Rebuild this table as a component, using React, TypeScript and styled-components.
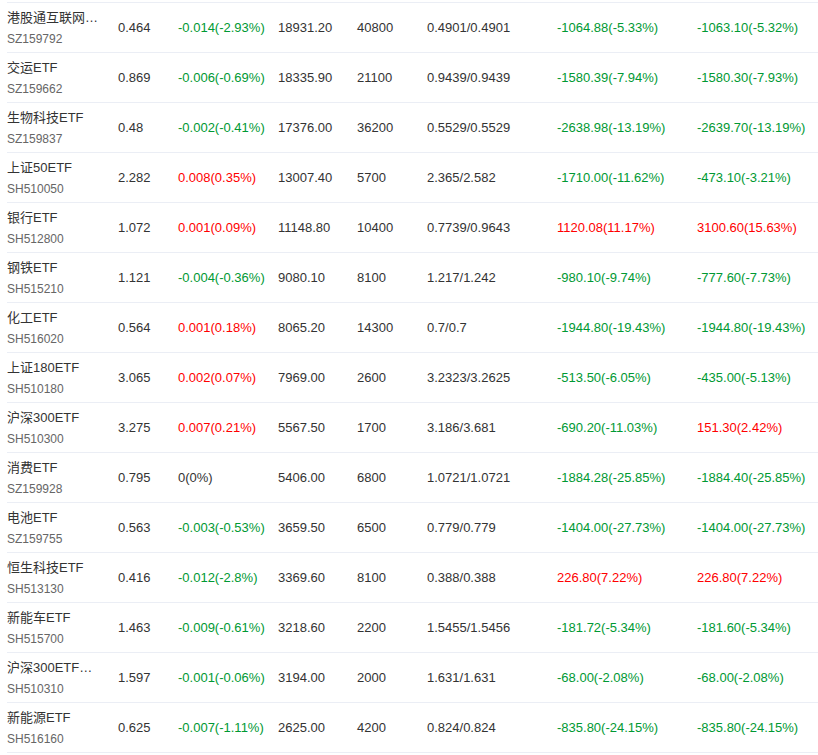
import React from "react";
import styled, { createGlobalStyle } from "styled-components";

const Global = createGlobalStyle`
  html, body { margin: 0; padding: 0; background: #fff; }
  body { font-family: "Liberation Sans", Arial, "Noto Sans CJK SC", sans-serif; color: #333; overflow: hidden; }
`;

type Tone = "up" | "down" | "flat";

const Table = styled.div`
  margin: 2px 0 0 7px;
  border-top: 1px solid #ebeef5;
`;

const Row = styled.div`
  display: grid;
  grid-template-columns: 111px 60px 100px 79px 70px 130px 140px 1fr;
  align-items: center;
  height: 49px;
  border-bottom: 1px solid #ebeef5;
  font-size: 13px;
`;

const NameCell = styled.div`
  display: flex;
  flex-direction: column;
  padding-top: 2px;
`;

const Name = styled.div`
  width: 95px;
  font-size: 13px;
  line-height: 20px;
  color: #333;
  white-space: nowrap;
  overflow: hidden;
  text-overflow: ellipsis;
`;

const Code = styled.div`
  font-size: 12px;
  line-height: 21px;
  margin-top: 1px;
  color: #666;
`;

const Cell = styled.div<{ $tone?: Tone }>`
  white-space: nowrap;
  line-height: 20px;
  color: ${(p) => (p.$tone === "up" ? "#f00" : p.$tone === "down" ? "#093" : "#333")};
`;

type R = [string, string, string, string, string, string, string, string, string];

const rows: R[] = [
  ["港股通互联网ETF", "SZ159792", "0.464", "-0.014(-2.93%)", "18931.20", "40800", "0.4901/0.4901", "-1064.88(-5.33%)", "-1063.10(-5.32%)"],
  ["交运ETF", "SZ159662", "0.869", "-0.006(-0.69%)", "18335.90", "21100", "0.9439/0.9439", "-1580.39(-7.94%)", "-1580.30(-7.93%)"],
  ["生物科技ETF", "SZ159837", "0.48", "-0.002(-0.41%)", "17376.00", "36200", "0.5529/0.5529", "-2638.98(-13.19%)", "-2639.70(-13.19%)"],
  ["上证50ETF", "SH510050", "2.282", "0.008(0.35%)", "13007.40", "5700", "2.365/2.582", "-1710.00(-11.62%)", "-473.10(-3.21%)"],
  ["银行ETF", "SH512800", "1.072", "0.001(0.09%)", "11148.80", "10400", "0.7739/0.9643", "1120.08(11.17%)", "3100.60(15.63%)"],
  ["钢铁ETF", "SH515210", "1.121", "-0.004(-0.36%)", "9080.10", "8100", "1.217/1.242", "-980.10(-9.74%)", "-777.60(-7.73%)"],
  ["化工ETF", "SH516020", "0.564", "0.001(0.18%)", "8065.20", "14300", "0.7/0.7", "-1944.80(-19.43%)", "-1944.80(-19.43%)"],
  ["上证180ETF", "SH510180", "3.065", "0.002(0.07%)", "7969.00", "2600", "3.2323/3.2625", "-513.50(-6.05%)", "-435.00(-5.13%)"],
  ["沪深300ETF", "SH510300", "3.275", "0.007(0.21%)", "5567.50", "1700", "3.186/3.681", "-690.20(-11.03%)", "151.30(2.42%)"],
  ["消费ETF", "SZ159928", "0.795", "0(0%)", "5406.00", "6800", "1.0721/1.0721", "-1884.28(-25.85%)", "-1884.40(-25.85%)"],
  ["电池ETF", "SZ159755", "0.563", "-0.003(-0.53%)", "3659.50", "6500", "0.779/0.779", "-1404.00(-27.73%)", "-1404.00(-27.73%)"],
  ["恒生科技ETF", "SH513130", "0.416", "-0.012(-2.8%)", "3369.60", "8100", "0.388/0.388", "226.80(7.22%)", "226.80(7.22%)"],
  ["新能车ETF", "SH515700", "1.463", "-0.009(-0.61%)", "3218.60", "2200", "1.5455/1.5456", "-181.72(-5.34%)", "-181.60(-5.34%)"],
  ["沪深300ETF易方达", "SH510310", "1.597", "-0.001(-0.06%)", "3194.00", "2000", "1.631/1.631", "-68.00(-2.08%)", "-68.00(-2.08%)"],
  ["新能源ETF", "SH516160", "0.625", "-0.007(-1.11%)", "2625.00", "4200", "0.824/0.824", "-835.80(-24.15%)", "-835.80(-24.15%)"],
];

const tone = (v: string): Tone => {
  if (v.startsWith("-")) return "down";
  if (/^0(\.0+)?\(0%\)$/.test(v)) return "flat";
  return "up";
};

export default function App() {
  return (
    <>
      <Global />
      <Table>
        {rows.map((r) => (
          <Row key={r[1]}>
            <NameCell>
              <Name>{r[0]}</Name>
              <Code>{r[1]}</Code>
            </NameCell>
            <Cell>{r[2]}</Cell>
            <Cell $tone={tone(r[3])}>{r[3]}</Cell>
            <Cell>{r[4]}</Cell>
            <Cell>{r[5]}</Cell>
            <Cell>{r[6]}</Cell>
            <Cell $tone={tone(r[7])}>{r[7]}</Cell>
            <Cell $tone={tone(r[8])}>{r[8]}</Cell>
          </Row>
        ))}
      </Table>
    </>
  );
}
